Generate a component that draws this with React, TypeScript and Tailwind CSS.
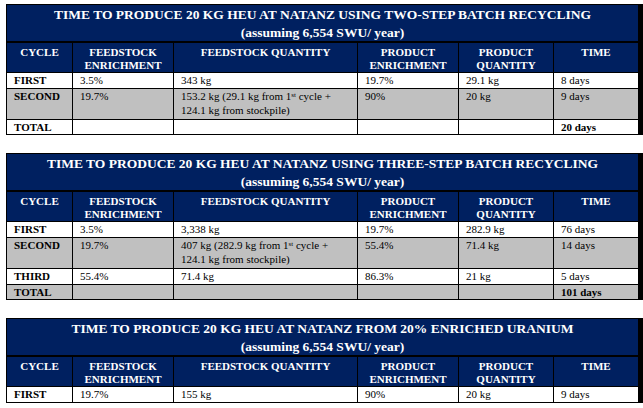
import type { ReactNode } from 'react'

type Row = {
  cycle: string
  feedEnrichment: string
  feedQuantity: ReactNode
  productEnrichment: string
  productQuantity: string
  time: string
  shaded?: boolean
  tall?: boolean
}

type TableData = {
  title: string
  rows: Row[]
  total?: { time: string; shaded?: boolean }
}

const fromCycle = (amount: string, first: string) => (
  <>
    {amount} ({first} kg from 1<sup className="text-[7px] leading-none">st</sup> cycle +
    <br />
    124.1 kg from stockpile)
  </>
)

const tables: TableData[] = [
  {
    title: 'TIME TO PRODUCE 20 KG HEU AT NATANZ USING TWO-STEP BATCH RECYCLING',
    rows: [
      { cycle: 'FIRST', feedEnrichment: '3.5%', feedQuantity: '343 kg', productEnrichment: '19.7%', productQuantity: '29.1 kg', time: '8 days' },
      { cycle: 'SECOND', feedEnrichment: '19.7%', feedQuantity: fromCycle('153.2 kg', '29.1'), productEnrichment: '90%', productQuantity: '20 kg', time: '9 days', shaded: true, tall: true },
    ],
    total: { time: '20 days' },
  },
  {
    title: 'TIME TO PRODUCE 20 KG HEU AT NATANZ USING THREE-STEP BATCH RECYCLING',
    rows: [
      { cycle: 'FIRST', feedEnrichment: '3.5%', feedQuantity: '3,338 kg', productEnrichment: '19.7%', productQuantity: '282.9 kg', time: '76 days' },
      { cycle: 'SECOND', feedEnrichment: '19.7%', feedQuantity: fromCycle('407 kg', '282.9'), productEnrichment: '55.4%', productQuantity: '71.4 kg', time: '14 days', shaded: true, tall: true },
      { cycle: 'THIRD', feedEnrichment: '55.4%', feedQuantity: '71.4 kg', productEnrichment: '86.3%', productQuantity: '21 kg', time: '5 days' },
    ],
    total: { time: '101 days', shaded: true },
  },
  {
    title: 'TIME TO PRODUCE 20 KG HEU AT NATANZ FROM 20% ENRICHED URANIUM',
    rows: [
      { cycle: 'FIRST', feedEnrichment: '19.7%', feedQuantity: '155 kg', productEnrichment: '90%', productQuantity: '20 kg', time: '9 days' },
    ],
  },
]

const headers: ReactNode[] = [
  'CYCLE',
  <>FEEDSTOCK<br />ENRICHMENT</>,
  'FEEDSTOCK QUANTITY',
  <>PRODUCT<br />ENRICHMENT</>,
  <>PRODUCT<br />QUANTITY</>,
  'TIME',
]

const HeuTable = ({ data }: { data: TableData }) => (
  <div className="grid grid-cols-[65px_100px_183px_100px_94px_84px] gap-px border border-black bg-black">
    <div className="col-span-6 flex h-[37px] flex-col items-center border-b border-black bg-[#002060] pt-[1px] font-bold whitespace-nowrap text-white">
      <div className="text-[13.5px] leading-[18px]">{data.title}</div>
      <div className="text-[13.5px] leading-[18px]">(assuming 6,554 SWU/ year)</div>
    </div>

    {headers.map((header, i) => (
      <div key={i} className="h-[29px] bg-[#002060] pt-[3px] text-center text-[11px] leading-[13px] font-bold text-white">
        {header}
      </div>
    ))}

    {data.rows.map((row) => {
      const cellClass = `${row.shaded ? 'bg-[#c0c0c0]' : 'bg-white'} ${row.tall ? 'h-[30px]' : 'h-[15px]'} px-[7px] text-[11px] leading-[14px] text-black`
      return [
        <div key={`${row.cycle}-c`} className={`${cellClass} font-bold`}>{row.cycle}</div>,
        <div key={`${row.cycle}-fe`} className={cellClass}>{row.feedEnrichment}</div>,
        <div key={`${row.cycle}-fq`} className={cellClass}>{row.feedQuantity}</div>,
        <div key={`${row.cycle}-pe`} className={cellClass}>{row.productEnrichment}</div>,
        <div key={`${row.cycle}-pq`} className={cellClass}>{row.productQuantity}</div>,
        <div key={`${row.cycle}-t`} className={cellClass}>{row.time}</div>,
      ]
    })}

    {data.total
      ? ['TOTAL', '', '', '', '', data.total.time].map((text, i) => (
          <div
            key={`total-${i}`}
            className={`${data.total!.shaded ? 'bg-[#c0c0c0]' : 'bg-white'} h-[14px] px-[7px] text-[11px] leading-[14px] font-bold text-black`}
          >
            {text}
          </div>
        ))
      : null}
  </div>
)

export default function App() {
  return (
    <main className="min-h-[408px] w-[643px] bg-white pl-[6px] pt-[4px] font-['Liberation_Serif',serif]">
      <div className="flex flex-col gap-[18px]">
        {tables.map((table) => (
          <HeuTable key={table.title} data={table} />
        ))}
      </div>
    </main>
  )
}
